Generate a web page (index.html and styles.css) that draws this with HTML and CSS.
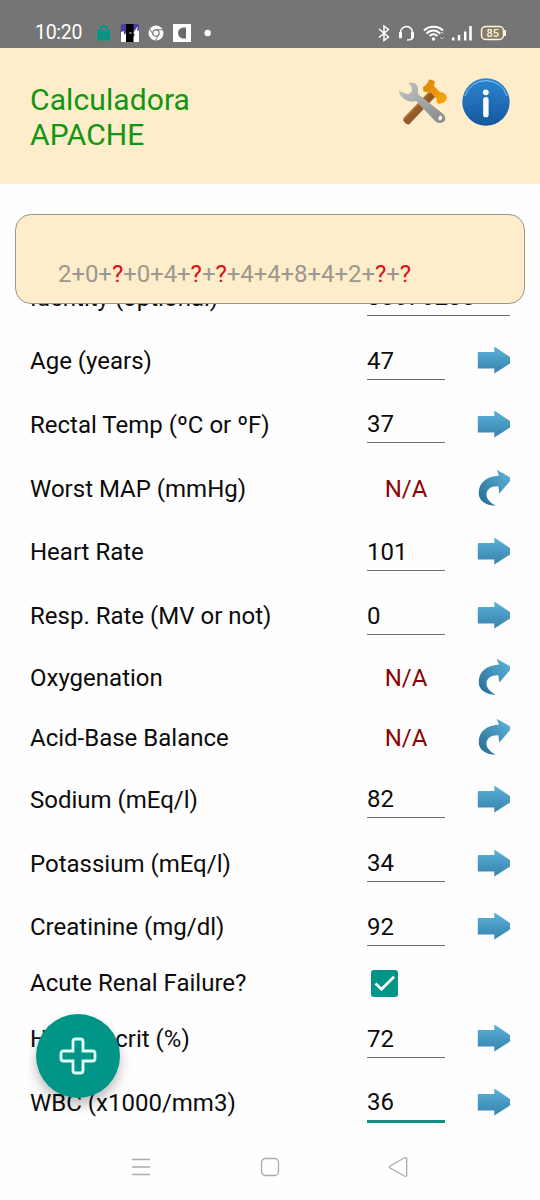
FILE: index.html
```
<!DOCTYPE html>
<html lang="es">
<head>
  <meta charset="UTF-8">
  <meta name="viewport" content="width=device-width, initial-scale=1.0">
  <title>Calculadora APACHE</title>
  <link rel="stylesheet" href="styles.css">
</head>
<body>
  <!-- shared icons -->
  <svg class="defs" width="0" height="0">
    <defs>
      <linearGradient id="blue" x1="0" y1="0" x2="0" y2="1">
        <stop offset="0" stop-color="#5cb1da"/>
        <stop offset="1" stop-color="#3583ad"/>
      </linearGradient>
      <linearGradient id="turn" x1="1" y1="0" x2="0" y2="1">
        <stop offset="0" stop-color="#5fb4de"/>
        <stop offset="1" stop-color="#246b8f"/>
      </linearGradient>
      <symbol id="next" viewBox="0 0 33 38">
        <path d="M.8 11.500Q.8 11 1.500 11H17.300V5.500L33 16V22.500L17.300 32.500V27.500H1.500Q.8 27.500 .8 27Z" fill="url(#blue)"/>
      </symbol>
      <symbol id="redo" viewBox="0 0 33 38">
        <path d="M19.700 .700L33 8.300V12.300L22.300 24.500L21.300 17.300C14 17 9.500 20.500 9.500 25.500C9.500 30 13 33.500 18.700 36.700C8 36.500 1.700 31.500 1.700 24C1.700 14 9 7.500 22 6.500Z" fill="url(#turn)"/>
      </symbol>
    </defs>
  </svg>

  <div class="statusbar">
    <span class="time">10:20</span>
    <svg class="status-left" width="120" height="20" viewBox="0 0 120 20">
      <path d="M4.500 8V5a3.200 3.200 0 0 1 6.400 0V8" fill="none" stroke="#009587" stroke-width="1.800"/>
      <rect x="1.300" y="6" width="12.700" height="10.500" rx="1" fill="#009587"/>
      <circle cx="7.600" cy="11" r="1.200" fill="#5d807c"/>
      <rect x="24.700" y="0" width="18.300" height="18" rx="2" fill="#4a3f9b"/>
      <path d="M25 8L28 7V11L30 9V18H25ZM37 9L42 2L41 7L43 6V18H37V13L39 11Z" fill="#fff"/>
      <rect x="30" y="0" width="7.500" height="18" fill="#000"/>
      <path d="M33 9h1.500M35 8v1.500" stroke="#ccc"/>
      <circle cx="60" cy="9" r="7.500" fill="#fff"/>
      <circle cx="60" cy="9" r="3.200" fill="#fff" stroke="#767676" stroke-width="1.200"/>
      <path d="M60 5.800H67M57.200 10.600L53.700 4.800M62.800 10.600L59.300 16.500" stroke="#767676" stroke-width="1"/>
      <rect x="77" y="0" width="18" height="18" fill="#fff"/>
      <path d="M90 3.500V14.500H87.500a5.500 5.500 0 0 1 0-11Z" fill="#6b6b6b"/>
      <circle cx="111.700" cy="9" r="3.200" fill="#fff"/>
    </svg>
    <svg class="status-right" width="130" height="20" viewBox="0 0 130 20" fill="none" stroke="#fff" stroke-width="1.500">
      <path d="M1 5L10.500 13L6 16.500V2L10.500 5.500L1 13.500"/>
      <path d="M22.500 10V8.500a6 6 0 0 1 12 0V10M34.500 13.500C34.500 15.500 33 16 29 16"/>
      <path d="M22.500 9V13M34.500 9V13" stroke-width="3" stroke-linecap="round"/>
      <path d="M46 6.500C51 1.500 60 1.500 65 6.500M48.500 9.500C52.500 5.500 58.500 5.500 62 9.500M51.500 12C54 9.800 57 9.800 59.500 12" stroke-width="2"/>
      <circle cx="55.500" cy="15" r="1.700" fill="#fff" stroke="none"/>
      <path d="M62 10L64 8L66 10M62 13L64 15L66 13" stroke="#bbb" stroke-width="1"/>
      <path d="M75.200 16.500V13.500M81 16.500V11M87.200 16.500V7.500M92.500 16.500V2" stroke-width="2.500"/>
      <rect x="103.500" y="2.500" width="22" height="13" rx="4" fill="#867c68" stroke="#fff3dc"/>
      <path d="M127 6V12" stroke="#fff3dc" stroke-width="2"/>
      <text x="114.800" y="13" class="battery">85</text>
    </svg>
  </div>

  <header class="appbar">
    <h1>Calculadora<br>APACHE</h1>
    <div class="actions">
      <svg class="tools" width="50" height="50" viewBox="0 0 50 50">
        <defs>
          <linearGradient id="gold" x1="0" y1="0" x2="1" y2="1">
            <stop offset="0" stop-color="#d48608"/>
            <stop offset="1" stop-color="#ffa90e"/>
          </linearGradient>
          <linearGradient id="steel" x1="0" y1="0" x2="1" y2="1">
            <stop offset="0" stop-color="#c3c4c7"/>
            <stop offset="1" stop-color="#85878a"/>
          </linearGradient>
        </defs>
        <path d="M4 41L31 12L37 17L10 45.500Q7 46 4 41Z" fill="#965a29"/>
        <path d="M5 40L33 11" stroke="#ad6e36" stroke-width="2"/>
        <path d="M30 .500Q32 0 36 2.500L35 7L41 13Q47 13 48 19L46 23L40 25Q36 23 38 20L32 14L24.500 12.500L24 8Q29 5 30 .500Z" fill="url(#gold)"/>
        <path d="M9 4Q17 2 19 9L19 15L43 34Q48 38 45.500 42Q41 46 36 42L17 22Q11 24 5 20Q0 16 0 12L8 15Q12 15 13 11Q13 7 9 4Z" fill="url(#steel)"/>
        <ellipse cx="41.300" cy="39" rx="1.900" ry="2.500" transform="rotate(25 41.300 39)" fill="#fff0cf"/>
      </svg>
      <svg width="48" height="48" viewBox="0 0 48 48">
        <defs>
          <linearGradient id="info" x1="0" y1="0" x2="0" y2="1">
            <stop offset="0" stop-color="#2d86d0"/>
            <stop offset="1" stop-color="#14579f"/>
          </linearGradient>
        </defs>
        <circle cx="24" cy="24" r="23.700" fill="url(#info)"/>
        <path d="M3 18A22 22 0 0 1 45 18" fill="none" stroke="#8fc3ea" stroke-width="1"/>
        <circle cx="23.800" cy="14.300" r="2.900" fill="#fff"/>
        <rect x="21.200" y="19" width="5.400" height="20.300" rx="2.600" fill="#fff"/>
      </svg>
    </div>
  </header>

  <main class="content">
    <section class="score">
      2+0+<b>?</b>+0+4+<b>?</b>+<b>?</b>+4+4+8+4+2+<b>?</b>+<b>?</b>
    </section>

    <div class="list">
      <div class="row"><label>Identity (optional)</label><span class="field wide">85676285</span></div>
      <div class="row"><label>Age (years)</label><span class="field">47</span><svg class="go"><use href="#next"/></svg></div>
      <div class="row"><label>Rectal Temp (ºC or ºF)</label><span class="field">37</span><svg class="go"><use href="#next"/></svg></div>
      <div class="row"><label>Worst MAP (mmHg)</label><span class="na">N/A</span><svg class="go"><use href="#redo"/></svg></div>
      <div class="row"><label>Heart Rate</label><span class="field">101</span><svg class="go"><use href="#next"/></svg></div>
      <div class="row"><label>Resp. Rate (MV or not)</label><span class="field">0</span><svg class="go"><use href="#next"/></svg></div>
      <div class="row short"><label>Oxygenation</label><span class="na">N/A</span><svg class="go"><use href="#redo"/></svg></div>
      <div class="row short"><label>Acid-Base Balance</label><span class="na">N/A</span><svg class="go"><use href="#redo"/></svg></div>
      <div class="row"><label>Sodium (mEq/l)</label><span class="field">82</span><svg class="go"><use href="#next"/></svg></div>
      <div class="row"><label>Potassium (mEq/l)</label><span class="field">34</span><svg class="go"><use href="#next"/></svg></div>
      <div class="row"><label>Creatinine (mg/dl)</label><span class="field">92</span><svg class="go"><use href="#next"/></svg></div>
      <div class="row check">
        <label>Acute Renal Failure?</label>
        <svg class="checkbox" width="27" height="27" viewBox="0 0 27 27">
          <rect width="27" height="27" rx="3" fill="#009587"/>
          <path d="M4.500 13.500L10.500 19.300L23 6.800" fill="none" stroke="#fff" stroke-width="2.700"/>
        </svg>
      </div>
      <div class="row"><label>Hematocrit (%)</label><span class="field">72</span><svg class="go"><use href="#next"/></svg></div>
      <div class="row"><label>WBC (x1000/mm3)</label><span class="field active">36</span><svg class="go"><use href="#next"/></svg></div>
    </div>
  </main>

  <button class="fab">
    <svg width="38" height="38" viewBox="0 0 38 38">
      <path d="M16.500 2h5a2.500 2.500 0 0 1 2.500 2.500V14h9.500a2.500 2.500 0 0 1 2.500 2.500v5a2.500 2.500 0 0 1-2.500 2.500H24v9.500a2.500 2.500 0 0 1-2.500 2.500h-5a2.500 2.500 0 0 1-2.500-2.500V24H4.500A2.500 2.500 0 0 1 2 21.500v-5A2.500 2.500 0 0 1 4.500 14H14V4.500A2.500 2.500 0 0 1 16.500 2Z" fill="none" stroke="#e0fffa" stroke-width="2.800"/>
    </svg>
  </button>

  <nav class="navbar">
    <svg width="20" height="20" viewBox="0 0 20 20"><path d="M1 2.500H19M1 10H19M1 17.500H19"/></svg>
    <svg width="20" height="20" viewBox="0 0 20 20"><rect x="1.500" y="1.500" width="17" height="17" rx="4"/></svg>
    <svg width="20" height="20" viewBox="0 0 20 20"><path d="M2 9L16.500 .800Q18.700 0 18.700 2V18Q18.700 20 16.500 19L2 11Q.500 10 2 9Z"/></svg>
  </nav>
</body>
</html>
```
FILE: styles.css
```
* {
  box-sizing: border-box;
}
body {
  position: relative;
  width: 540px;
  height: 1200px;
  margin: 0;
  overflow: hidden;
  display: flex;
  flex-direction: column;
  background: #fefefe;
  color: #0c0c0c;
  font-family: Roboto, "Noto Sans", sans-serif;
}
.defs {
  position: absolute;
}

/* status bar */
.statusbar {
  display: flex;
  flex-shrink: 0;
  height: 48px;
  padding: 24px 32px 0 35px;
  background: #757575;
  color: #fff;
}
.time {
  width: 61px;
  font-size: 19.500px;
  line-height: 18px;
  letter-spacing: -0.3px;
}
.status-right {
  margin-left: auto;
}
.battery {
  fill: #fff3dc;
  stroke: none;
  font-size: 11px;
  font-weight: 500;
  text-anchor: middle;
}

/* header */
.appbar {
  display: flex;
  flex-shrink: 0;
  justify-content: space-between;
  height: 136px;
  padding: 30px 30px 0;
  background: #fdedcb;
}
h1 {
  margin: 4px 0 0;
  color: #109610;
  font-size: 30px;
  font-weight: 400;
  line-height: 35px;
  letter-spacing: 0.1px;
}
.actions {
  display: flex;
  gap: 13px;
}
.tools {
  margin-top: 1px;
}

/* score and list */
.content {
  position: relative;
  flex: 1;
  min-height: 0;
  padding-top: 81.700px;
}
.score {
  position: absolute;
  z-index: 1;
  top: 30px;
  left: 15px;
  width: 510px;
  height: 90px;
  padding: 45px 42px 0;
  border: 1.500px solid #9c968b;
  border-radius: 16px;
  background: #fdedcb;
  color: #9d988d;
  font-size: 24px;
  line-height: 28px;
  letter-spacing: -0.08px;
}
.score b {
  color: #e10c0c;
  font-weight: 400;
}
.row {
  display: grid;
  grid-template-columns: 337px 78px 65px;
  align-items: center;
  height: 63.720px;
  padding: 0 30px;
  font-size: 24px;
  line-height: 28px;
}
.row.short {
  height: 60px;
}
.row.check {
  height: 48px;
}
.field {
  height: 33px;
  margin-top: 4px;
  border-bottom: 1.500px solid #6e6e6e;
}
.field.wide {
  width: 143px;
}
.field.active {
  height: 35px;
  margin-top: 6px;
  border-bottom: 3px solid #12907f;
}
.na {
  color: #8b0505;
  text-align: center;
}
.go {
  width: 33px;
  height: 38px;
  margin-top: -2px;
  justify-self: end;
}
.checkbox {
  margin-left: 4px;
}

/* floating button */
.fab {
  position: absolute;
  z-index: 2;
  left: 36px;
  top: 1014px;
  display: flex;
  align-items: center;
  justify-content: center;
  width: 84px;
  height: 84px;
  padding: 0;
  border: 0;
  border-radius: 50%;
  background: #009587;
  box-shadow: 0 7px 12px rgba(0, 0, 0, .26);
}

/* navigation */
.navbar {
  display: flex;
  flex-shrink: 0;
  justify-content: space-between;
  height: 66px;
  padding: 23px 132px 0 131px;
  fill: none;
  stroke: #aaa;
  stroke-width: 1.300;
}
```
